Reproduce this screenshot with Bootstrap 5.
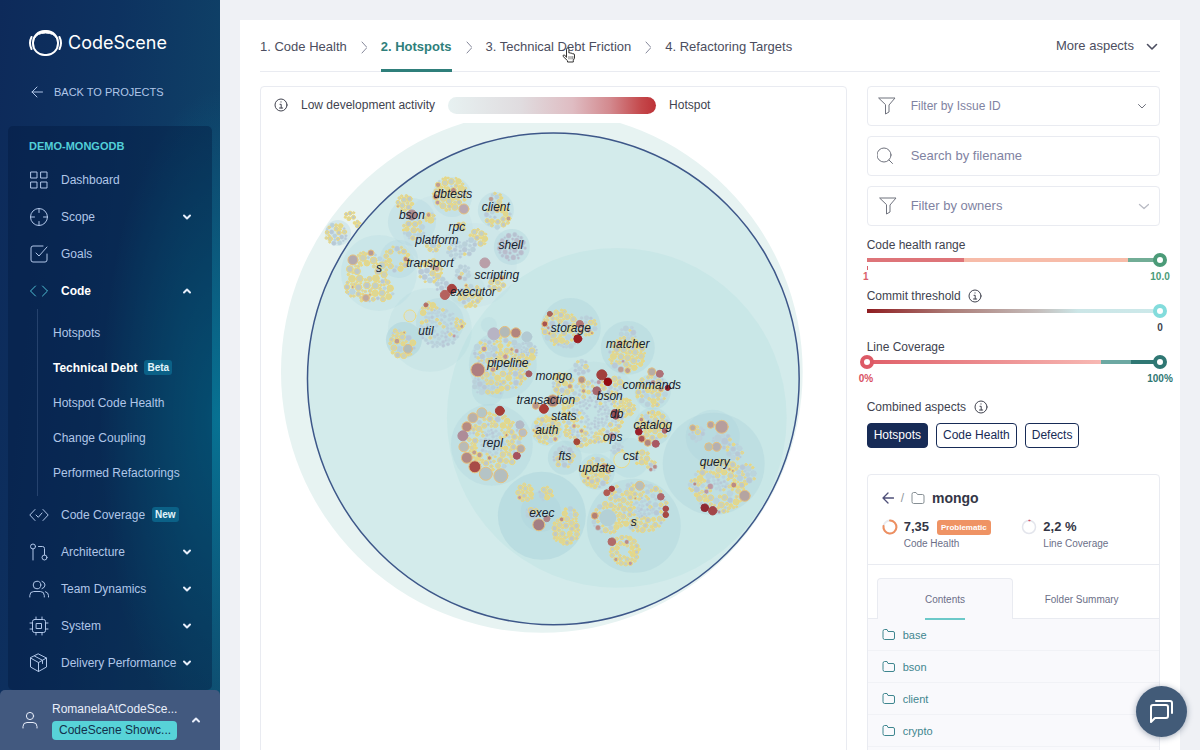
<!DOCTYPE html>
<html lang="en">
<head>
<meta charset="utf-8">
<meta name="viewport" content="width=device-width, initial-scale=1">
<title>CodeScene – Technical Debt</title>
<link href="https://cdn.jsdelivr.net/npm/bootstrap@5.3.0/dist/css/bootstrap.min.css" rel="stylesheet">
<style>
  :root { --ink:#41434f; --muted:#6c6f88; --line:#e9ebf1; --teal:#2f7f7b; --navy:#172b56; --side:#b0c6e8; }
  body { font-family: "Liberation Sans", Arial, sans-serif; font-size: 12px; line-height: 16px; color: var(--ink); background: #eff1f5; }
  svg { fill: none; stroke: currentColor; stroke-width: 1; stroke-linecap: round; stroke-linejoin: round; flex: none; }
  a { text-decoration: none; color: inherit; }
  .scroller { overflow: auto; scrollbar-width: none; }
  .scroller::-webkit-scrollbar { display: none; }

  .sidebar { width: 220px; color: var(--side);
    background: radial-gradient(ellipse 120px 330px at 100% 56%, #077293 0, rgba(7,114,147,0) 100%),
      linear-gradient(96deg, #0d2a5a 0%, #0d3260 40%, #10496b 100%); }
  .brand { padding: 29px 28px 0; gap: 5px; font-family: Inter, sans-serif; font-size: 18px; line-height: 28px; color: #fff; }
  .back { padding: 0 31px; margin: 26px 0 25px; gap: 11px; font-size: 11px; line-height: 18px; }
  .menu-box { margin: 0 8px; padding: 3px 0; border-radius: 5px; min-height: 0; overflow: hidden; background: rgba(3,24,62,.4); }
  .menu-box h2 { margin: 0; padding: 0 21px; font-size: 11px; font-weight: 600; line-height: 35px; height: 32px; color: #52cfd8; }
  .menu-item { height: 37px; padding: 0 20px 0 21px; color: inherit; white-space: nowrap; }
  .menu-item svg:first-child { margin-right: 12px; }
  .menu-item .go { margin-left: auto; color: #e6eefb; stroke-width: 2; }
  .menu-item .tag { margin-left: 7px; }
  .menu-item.is-open { color: #fff; font-weight: 600; }
  .menu-item.is-open svg:first-child { color: #4fc0d4; }
  .submenu { margin: 0 0 0 29px; padding: 6px 0 6px 15px; border-left: 1px solid rgba(140,170,210,.22); }
  .submenu a { display: flex; align-items: center; gap: 7px; height: 35px; white-space: nowrap; }
  .submenu a.on { color: #fff; font-weight: 600; }
  .tag { padding: 0 3px; border-radius: 3px; background: #0b6187; color: #e2f4fa; font-size: 10px; font-weight: 600; line-height: 15px; }
  .account { height: 60px; padding: 0 19px 0 22px; gap: 14px; background: #42597f; border-radius: 5px 5px 0 0; color: #e8eefa; border: 0; text-align: left; white-space: nowrap; }
  .account .plan { width: 125px; padding: 0 7px; line-height: 19px; border-radius: 4px; background: #57d3d8; color: #12304c; }
  .account svg:last-child { stroke-width: 2; }

  .page { margin: 20px 20px 0; padding: 0 20px; background: #fff; }
  .aspects { height: 52px; border-bottom: 1px solid var(--line); font-size: 13px; }
  .aspects ol { gap: 14px; }
  .aspects ol svg { color: #85889a; }
  .aspects li a { display: block; line-height: 54px; height: 52px; white-space: nowrap; }
  .aspects li a.on { color: var(--teal); font-weight: 600; border-bottom: 3px solid var(--teal); }
  .aspects button, .aspects a { color: #4c4e60; }
  .pointer { left: 76px; top: 27px; }
  .columns { display: grid; grid-template-columns: 2fr 1fr; gap: 20px; padding-top: 14px; }
  .panel { border: 1px solid var(--line); border-radius: 4px; }
  .legend-row { height: 36px; padding: 0 13px; gap: 13px; }
  .scale-bar { width: 208px; height: 17px; border-radius: 9px; background: linear-gradient(90deg,#e7f1f1,#e0dcdf 35%,#dfbcc2 60%,#d3898e 78%,#c4484b 93%,#bd3238); }
  .bubbles { display: block; width: 100%; height: auto; }
  .bubbles text { font: italic 12px "Liberation Sans", Arial, sans-serif; fill: #17202b; stroke: none; text-anchor: middle; }

  .field { height: 40px; padding: 0 10px 0 9px; gap: 14px; margin-bottom: 10px; color: #6f727d; }
  .field input, .field select { flex: 1; min-width: 0; border: 0; outline: 0; background: none; appearance: none; color: #7f83a2; padding: 0; }
  .field input::placeholder { color: #7f83a2; opacity: 1; }
  .field .roomy { font-size: 13px; }
  .range-row { margin-bottom: 2px; }
  .range-row label, .range-row .cap { display: flex; align-items: center; gap: 7px; height: 17px; }
  .rail { position: relative; height: 14px; margin: 0 -7px; }
  .rail input { position: absolute; inset: 0; width: 100%; height: 14px; margin: 0; appearance: none; background: none; pointer-events: none; }
  .rail input::-webkit-slider-runnable-track { height: 14px; background: var(--track, none) no-repeat center / calc(100% - 14px) 4px; }
  .rail input::-webkit-slider-thumb { appearance: none; pointer-events: auto; width: 14px; height: 14px; border-radius: 50%; background: #fff; border: 4px solid var(--knob); }
  .ends { display: flex; justify-content: space-between; height: 18px; margin: 0 -14px 0 -8px; font-size: 10px; line-height: 20px; font-weight: 600; }
  .ends span { min-width: 14px; text-align: center; }
  .ends span:last-child { min-width: 28px; }
  .tick-end { border-left: 1px solid #d9606b; height: 4px; width: 1px; left: 7px; top: 13px; }
  .combined { padding: 10px 0 8px; }
  .chip { height: 25px; padding: 0 6px; border: 1px solid var(--navy); border-radius: 4px; background: #fff; color: var(--navy); line-height: 23px; }
  .chip.on { background: var(--navy); color: #fff; }

  .details { margin-top: 26px; overflow: hidden; }
  .summary { padding: 12px 14px 13px; border-bottom: 1px solid var(--line); }
  .crumb { height: 22px; margin-bottom: 8px; gap: 7px; }
  .crumb strong { font-size: 14px; color: #343646; }
  .metric { gap: 6px; font-size: 10px; line-height: 14px; color: var(--muted); }
  .metric strong { font-size: 13px; line-height: 20px; font-weight: 600; color: #343646; }
  .flag { background: #ef9364; color: #fff; font-size: 8px; font-weight: 600; line-height: 15px; border-radius: 3px; padding: 0 4px; }
  .folder-tabs { padding: 13px 9px 0; border-bottom: 1px solid var(--line); font-size: 10px; }
  .folder-tabs button { flex: 1; height: 41px; margin-bottom: -1px; border: 1px solid transparent; border-bottom: 0; background: none; color: var(--muted); padding: 0; }
  .folder-tabs button.on { background: #f9f9fc; border-color: var(--line); border-radius: 4px 4px 0 0; }
  .folder-tabs button span { display: inline-block; line-height: 37px; min-width: 40px; }
  .folder-tabs button.on span { box-shadow: 0 2px #6cc9c9; }
  .folder-list { background: #f9f9fc; font-size: 11px; }
  .folder-list a { display: flex; align-items: center; gap: 8px; height: 32px; padding: 0 14px; color: #3f868f; border-bottom: 1px solid #f1f2f6; }
  .chat { right: 13px; bottom: 13px; width: 51px; height: 51px; background: #425b78; color: #fff; box-shadow: 0 1px 6px rgba(30,50,80,.4); }
  .chat svg { stroke-width: 2; }
</style>
</head>
<body>
<div class="d-flex vh-100 overflow-hidden">

  <aside class="sidebar d-flex flex-column flex-shrink-0">
    <a href="#" class="brand d-flex align-items-center">
      <svg width="35" height="28" viewBox="0 0 35 28"><rect x="5" y="2" width="25" height="24" rx="11.5" stroke-width="2"/><path d="M6 10Q8 2 17.500 2T29 10Q26 4 17.500 4T6 10Z" fill="currentColor"/><path d="M3.500 8Q.5 14 3.500 20M31.500 8Q34.500 14 31.500 20" stroke-width="2"/></svg>
      <span>CodeScene</span>
    </a>
    <a href="#" class="back d-flex align-items-center">
      <svg width="12" height="12" viewBox="0 0 12 12"><path d="M11.500 6H1M6 1L1 6l5 5"/></svg>
      <span>BACK TO PROJECTS</span>
    </a>
    <nav class="menu-box flex-grow-1">
      <h2>DEMO-MONGODB</h2>
      <a href="#" class="menu-item d-flex align-items-center"><svg width="20" height="20"><path d="M2 2h6v6H2zM12 2h6v6h-6zM2 12h6v6H2zM12 12h6v6h-6z"/></svg>Dashboard</a>
      <a href="#" class="menu-item d-flex align-items-center"><svg width="20" height="20"><circle cx="10" cy="10" r="8.500"/><path d="M10 1.500v4M10 14.500v4M1.500 10h4M14.500 10h4"/></svg>Scope<svg class="go" width="10" height="10"><path d="M2 3.500l3 3 3-3"/></svg></a>
      <a href="#" class="menu-item d-flex align-items-center"><svg width="20" height="20"><path d="M14 2H4a2 2 0 0 0-2 2v12a2 2 0 0 0 2 2h12a2 2 0 0 0 2-2v-6M7 9l3 3 8-9"/></svg>Goals</a>
      <a href="#" class="menu-item is-open d-flex align-items-center"><svg width="20" height="20"><path d="M6.500 5L1.500 10l5 5M13.500 5l5 5-5 5"/></svg>Code<svg class="go" width="10" height="10"><path d="M2 6.500l3-3 3 3"/></svg></a>
      <div class="submenu">
        <a href="#">Hotspots</a>
        <a href="#" class="on">Technical Debt <span class="tag">Beta</span></a>
        <a href="#">Hotspot Code Health</a>
        <a href="#">Change Coupling</a>
        <a href="#">Performed Refactorings</a>
      </div>
      <a href="#" class="menu-item d-flex align-items-center"><svg width="20" height="20"><path d="M6 4.500L.8 10 6 15.500M14 4.500l5.200 5.500-5.200 5.500M7 10l2.300 2.300L13 8"/></svg>Code Coverage<span class="tag">New</span></a>
      <a href="#" class="menu-item d-flex align-items-center"><svg width="20" height="20"><circle cx="4" cy="4.500" r="2.500"/><circle cx="15.500" cy="15.500" r="2.500"/><path d="M4 7v11M9.500 4.500h4q2 0 2 2V13"/></svg>Architecture<svg class="go" width="10" height="10"><path d="M2 3.500l3 3 3-3"/></svg></a>
      <a href="#" class="menu-item d-flex align-items-center"><svg width="20" height="20"><circle cx="8" cy="6" r="3.800"/><path d="M.8 18v-1.500q0-4 4-4h6.500q4 0 4 4V18M13 2.300q3 1 3 3.700t-3 3.700M16.500 12.700q3 .8 3 3.800V18"/></svg>Team Dynamics<svg class="go" width="10" height="10"><path d="M2 3.500l3 3 3-3"/></svg></a>
      <a href="#" class="menu-item d-flex align-items-center"><svg width="20" height="20"><rect x="3.500" y="3.500" width="13" height="13" rx="2"/><path d="M7.500 7.500h5v5h-5zM7 1v2.500M13 1v2.500M7 16.500V19M13 16.500V19M1 7h2.500M1 13h2.500M16.500 7H19M16.500 13H19"/></svg>System<svg class="go" width="10" height="10"><path d="M2 3.500l3 3 3-3"/></svg></a>
      <a href="#" class="menu-item d-flex align-items-center"><svg width="20" height="20"><path d="M9.500 1l8 4v9l-8 4.500L1.500 14V5zM1.500 5l8 4.500 8-4.500M9.500 9.500v9M5.500 3l8 4.300v3.200"/></svg>Delivery Performance<svg class="go" width="10" height="10"><path d="M2 3.500l3 3 3-3"/></svg></a>
      <span class="menu-item d-flex align-items-center"><svg width="20" height="20"><circle cx="10" cy="10" r="9"/></svg></span>
    </nav>
    <button class="account d-flex align-items-center flex-shrink-0" type="button">
      <svg width="16" height="18"><circle cx="8" cy="5" r="3.600"/><path d="M1 17v-1.500q0-4 4-4h6q4 0 4 4V17"/></svg>
      <span class="d-flex flex-column gap-1"><span>RomanelaAtCodeSce...</span><span class="plan">CodeScene Showc...</span></span>
      <svg class="ms-auto" width="10" height="10"><path d="M2 6.500l3-3 3 3"/></svg>
    </button>
  </aside>

  <main class="scroller flex-grow-1">
    <div class="page">
      <nav class="aspects d-flex justify-content-between">
        <ol class="list-unstyled d-flex align-items-start mb-0">
          <li><a href="#">1. Code Health</a></li>
          <li><svg width="6" height="54"><path d="M1 22l5 5.500-5 5.500"/></svg></li>
          <li><a href="#" class="on">2. Hotspots</a></li>
          <li><svg width="6" height="54"><path d="M1 22l5 5.500-5 5.500"/></svg></li>
          <li class="position-relative"><a href="#">3. Technical Debt Friction</a>
            <svg class="pointer position-absolute" width="14" height="16" viewBox="0 0 14 16"><path d="M4.500 10V2.200a1.200 1.200 0 0 1 2.400 0V6q1.200-.8 2 .3 1.300-.6 1.800.5 1.800-.5 1.800 1.200v3.200l-1.200 2V15H5.500v-1.300L1 9.300q-.4-1.600 1.300-1.300z" fill="#fff" stroke="#333"/><path d="M7 9.500v2.500M9 9.500v2.500M10.800 9.500v2.500" stroke="#555" stroke-width=".8"/></svg></li>
          <li><svg width="6" height="54"><path d="M1 22l5 5.500-5 5.500"/></svg></li>
          <li><a href="#">4. Refactoring Targets</a></li>
        </ol>
        <button type="button" class="border-0 bg-transparent p-0 d-flex align-items-center gap-2">More aspects <svg width="18" height="14"><path d="M5.500 5.500L10 10l4.500-4.500" stroke-width="1.600"/></svg></button>
      </nav>

      <div class="columns">
        <section class="panel">
          <div class="legend-row d-flex align-items-center">
            <svg width="14" height="14" viewBox="0 0 14 14"><circle cx="7" cy="7" r="6"/><path d="M6 6.300h1.200V10M5.500 10h3.200M7 3.800v.3"/></svg>
            <span>Low development activity</span><span class="scale-bar"></span><span>Hotspot</span>
          </div>
          <svg class="bubbles" id="bubbles" viewBox="261 123 585 640" role="img" aria-label="Hotspot map"></svg>
        </section>

        <section>
          <div class="field panel d-flex align-items-center"><svg width="20" height="20"><path d="M2 2h16l-6 7v7l-3.500 2V9z"/></svg>
            <select aria-label="Filter by Issue ID"><option>Filter by Issue ID</option></select><svg width="14" height="14"><path d="M3.500 5.500L7 9l3.500-3.500"/></svg></div>
          <div class="field panel d-flex align-items-center"><svg width="20" height="20"><circle cx="6" cy="9" r="7" transform="translate(1)"/><path d="M12 14l3.500 3.500"/></svg>
            <input class="roomy" type="text" placeholder="Search by filename" aria-label="Search by filename"></div>
          <div class="field panel d-flex align-items-center"><svg width="20" height="20"><path d="M3 2h16l-6 7v7l-3.500 2V9z"/></svg>
            <select class="roomy" aria-label="Filter by owners"><option>Filter by owners</option></select><svg width="14" height="14" color="#b9bbc4"><path d="M4.500 5.500L9 9.500l4.500-4" stroke-width="1.300"/></svg></div>

          <div class="range-row">
            <label for="health">Code health range</label>
            <div class="rail" style="--knob:#4b9b78;--track:linear-gradient(90deg,#de7479 33%,#f7bca9 33%,#f7bca9 89%,#72ad96 89%)"><input id="health" type="range" min="1" max="10" value="10"><span class="tick-end position-absolute"></span></div>
            <div class="ends"><span style="color:#d9606b">1</span><span style="color:#4b9b78">10.0</span></div>
          </div>
          <div class="range-row">
            <label for="commit">Commit threshold <svg width="14" height="14" viewBox="0 0 14 14"><circle cx="7" cy="7" r="6"/><path d="M6 6.300h1.200V10M5.500 10h3.200M7 3.800v.3"/></svg></label>
            <div class="rail" style="--knob:#83dcdc;--track:linear-gradient(90deg,#8f1d21,#ab7b76 28%,#c4bcba 58%,#cce6e7 72%,#cce9ea)"><input id="commit" type="range" value="100"></div>
            <div class="ends"><span></span><span>0</span></div>
          </div>
          <div class="range-row">
            <div class="cap">Line Coverage</div>
            <div class="rail" style="--knob:#2f7773"><input aria-label="Lowest coverage" type="range" value="0" style="--knob:#dd5a66;--track:linear-gradient(90deg,#e05f69,#f7b8b3 80%,#6ca8a2 80%,#6ca8a2 90%,#2f7773 90%)"><input aria-label="Highest coverage" type="range" value="100"></div>
            <div class="ends"><span style="color:#d9505f">0%</span><span style="color:#2f7773">100%</span></div>
          </div>

          <div class="combined d-flex align-items-center gap-2">Combined aspects <svg width="14" height="14" viewBox="0 0 14 14"><circle cx="7" cy="7" r="6"/><path d="M6 6.300h1.200V10M5.500 10h3.200M7 3.800v.3"/></svg></div>
          <div class="d-flex gap-2"><button type="button" class="chip on">Hotspots</button><button type="button" class="chip">Code Health</button><button type="button" class="chip">Defects</button></div>

          <div class="details panel">
            <div class="summary">
              <div class="crumb d-flex align-items-center">
                <a href="#" aria-label="Back"><svg class="d-block" width="12" height="12" viewBox="0 0 12 12" color="#4e4f78"><path d="M11.500 6H1M6 1L1 6l5 5" stroke-width="1.300"/></svg></a>
                <span class="text-secondary opacity-75">/</span>
                <svg width="14" height="14" color="#868f94"><path d="M1 3q0-1.500 1.500-1.500H5L6.500 3.500h5Q13 3.500 13 5V11q0 1.500-1.500 1.500h-9Q1 12.500 1 11z"/></svg>
                <strong>mongo</strong>
              </div>
              <div class="row g-0">
                <div class="col-6 d-flex metric"><svg width="16" height="20"><circle cx="8" cy="10" r="6.500" stroke="#e9ebef" stroke-width="2"/><path d="M8 3.500A6.500 6.500 0 1 1 1.500 9" stroke="#ee8f60" stroke-width="2"/></svg>
                  <div><div class="d-flex align-items-center gap-2"><strong>7,35</strong><span class="flag">Problematic</span></div>Code Health</div></div>
                <div class="col-6 d-flex metric ps-2"><svg width="16" height="20"><circle cx="8" cy="10" r="6.500" stroke="#e3e5ec" stroke-width="1.500"/><path d="M8 3.500h.8" stroke="#d9505f" stroke-width="1.500"/></svg>
                  <div><strong class="d-block">2,2 %</strong>Line Coverage</div></div>
              </div>
            </div>
            <div class="folder-tabs d-flex"><button type="button" class="on"><span>Contents</span></button><button type="button"><span>Folder Summary</span></button></div>
            <nav class="folder-list pb-4" id="folders"></nav>
          </div>
        </section>
      </div>
    </div>
  </main>
</div>
<button type="button" class="chat position-fixed rounded-circle border-0 p-0 d-flex align-items-center justify-content-center" aria-label="Chat">
  <svg width="26" height="26"><path d="M2 8q0-2 2-2h13q2 0 2 2v9q0 2-2 2H6l-4 4zM7 2h14q2 0 2 2v10"/></svg>
</button>

<script>
  document.getElementById('folders').innerHTML = ['base', 'bson', 'client', 'crypto'].map(n =>
    `<a href="#"><svg width="13" height="13"><path d="M1 3q0-1.500 1.500-1.500H5L6 3.500h5q1.500 0 1.500 1.500v5q0 1.500-1.500 1.500H2.500Q1 11.500 1 10z"/></svg>${n}</a>`).join('');

  // Seeded generator, so that the map is drawn alike on every load
  let seed = 7;
  const rnd = () => (seed = (seed * 16807) % 2147483647) / 2147483647;
  const out = [];
  const disc = (x, y, r, fill, extra = '') => out.push(`<circle cx="${x}" cy="${y}" r="${r}" fill="${fill}" stroke="none" ${extra}/>`);

  disc(542, 372, 261, '#e7f3f2');
  disc(553.5, 379, 246, '#d3ebeb');
  disc(617, 418, 170, '#c9e7e7');
  out.push('<circle cx="553.5" cy="379" r="246" stroke="#3d5789" stroke-width="1.500"/>');

  // Folder backgrounds: x, y, radius, strength
  [[452,197,20,.25],[496,210,18,.3],[412,222,24,.25],[338,233,13,.3],[379,273,38,.2],[399,259,19,.25],[512,247,18,.35],
   [430,330,42,.18],[440,322,24,.3],[404,340,18,.5],[438,230,35,.12],[475,265,42,.12],[467,290,18,.15],[503,365,34,.28],[489,325,8,.2],
   [571,328,30,.35],[628,348,27,.35],[492,445,41,.28],[547,430,16,.25],[565,458,17,.35],[597,472,18,.3],[630,458,20,.25],
   [653,392,18,.3],[653,427,19,.3],[714,464,51,.34],[713,437,27,.25],[542,516,44,.45],[541,512,20,.3],[634,526,47,.35],[594,408,46,.15],[488,390,16,.3]
  ].forEach(([x, y, r, k]) => disc(x, y, r, '#a9d1da', `opacity="${k}"`));

  // Large single files, kept in place while the small ones are packed round them
  const big = [
    [464,209,5,'#bba9b1',1],[412,215,5,'#ad8d92'],[353,260,5,'#b4aaae',1],[371,253,3,'#b59a98',1],[366,298,3.5,'#bda9a2',1],
    [452,289,4.6,'#a6423f'],[445,295,4.6,'#b5625e'],[485,263,5,'#b99fa8'],[410,316,6,'#cfe2de',2],[426,305,2,'#b26c62'],[408,349,4.5,'#b3bdb9',1],
    [478,370,7,'#ae7e80',1],[494,334,6,'#b7b4c4'],[505,332,5.5,'#b3bab8',1],[516,333,5,'#b2857f',1],[527,337,5,'#b3cad3'],[529,374,3,'#a55c61'],
    [500,411,4.5,'#a43d38'],[467,427,5,'#b68b82',1],[473,418,5,'#b9b1ab',1],[463,436,5,'#ae8c98'],[464,447,5,'#b8bbb7',1],[467,458,5.5,'#b28a85',1],[475,467,6,'#a84b48',1],
    [486,474,6.5,'#b5c4c6',1],[501,476,7,'#b4bebf',1],[482,413,5,'#b5c5c5',1],[517,456,3.5,'#a6525c'],[521,449,4,'#b7ada9',1],[523,433,4,'#b9bdc1',1],[520,425,4,'#b3b9c5'],
    [578,339,4,'#9b1d20'],[544,409,4.5,'#a83a34'],[553,401,6,'#a67e79',1],[536,406,3.5,'#b9968a',1],[545,324,3,'#a8544d',1],[550,314,2.5,'#ab6358'],[580,324,3.5,'#b27573'],
    [602,375,5,'#a2403d'],[608,382,3.8,'#940d11'],[597,391,4,'#a5666c'],[582,380,3.5,'#b39287',1],[616,416,3.4,'#9b4f56'],[615,413,3.4,'#9b4f56'],[612,436,3,'#b895a0'],[577,442,3,'#a64737'],
    [668,388,2.6,'#98202a'],[660,374,3.5,'#ae7177'],[652,372,4,'#b8ada4',1],[639,432,3.3,'#9a1f29'],[642,439,3.5,'#a55558',1],[648,443,3.5,'#b18780',1],[656,444,3.5,'#a95962'],[665,431,2.5,'#a96267'],
    [722,427,6.5,'#b69e9d',1],[711,425,3.5,'#b8a39e',1],[717,447,4.5,'#b5afb1',1],[709,447,4,'#b8beb4',1],[745,496,5.5,'#b5a4a1',1],[705,508,3.8,'#902a33'],[713,511,4.2,'#a34548'],[693,428,3,'#b9ada4',1],
    [539,525,6,'#a37e83',1],[547,519,3,'#ae8689'],[607,493,3,'#b15b52'],[612,489,2.7,'#a73e3c'],[608,518,8,'#b4d0d6'],[595,516,3.5,'#b48174',1],
    [661,497,3.3,'#ad666b'],[666,509,2.8,'#a94a48'],[666,515,2.8,'#a64940'],[612,542,3.8,'#b16c69'],[640,486,4.5,'#b9beb9',1],[622,460,8,'#c9e5e0',2]
  ];
  const placed = big.map(b => b.slice());

  // Packed groups of small files: x, y, radius, inner hole, largest dot, share of yellow outlines
  const groups = [
    [450,194,18,0,3,.92],[496,200,8,0,2.4,.6],[498,216,14,3,2.4,.7],[405,203,9,0,2.6,.85],[414,229,12,0,2.8,.6],[430,218,6,0,3,.8],[350,216,6,0,2,1],[357,224,4,0,2,.7],[336,234,12,0,2.2,.35],
    [367,272,21,7,3.4,.75],[383,290,12,0,3.2,.8],[354,288,10,0,3,.75],[367,293,11,0,3.2,.75],[397,259,14,6,2.6,.95],[512,247,15,0,2.6,.02],[478,238,10,0,2.8,.9],[467,248,9,0,2.6,.1],[433,245,8,0,3,.4],
    [430,271,13,0,2.8,.6],[456,250,10,0,2,.1],[461,227,6,0,2,.5],[432,267,6,0,2.5,.7],[463,273,9,0,2.4,.1],[470,296,13,0,2.4,.6],[497,283,10,0,2.4,.6],[441,284,8,0,2.5,.1],
    [460,325,6,0,2,1],[440,329,21,4,1.7,.12],[430,311,10,0,2.8,.9],[445,343,5,0,2,.8],[402,345,14,0,2.9,.75],[398,335,7,0,2.6,.6],
    [503,364,28,0,2.8,.65],[486,352,13,0,3,.2],[527,352,11,0,3,.2],[484,384,12,0,2.8,.1],[497,388,8,0,2.3,.7],[518,375,10,0,2.6,.6],
    [492,443,31,13,2.8,.85],[492,443,14,0,1.7,.2],[560,328,19,5,2.8,.75],[587,326,11,0,2.4,.65],[568,342,8,0,2.6,.3],[627,355,19,0,3,.85],[628,334,9,0,2.8,.2],
    [563,384,12,0,2.6,.7],[582,368,9,0,2.4,.2],[594,412,33,17,2.2,.55],[593,413,18,5,1.4,.06],[547,430,15,0,2.6,.9],[570,432,7,0,2.2,.8],[582,440,9,0,2.3,.8],[616,384,9,0,2.8,.4],[626,408,10,0,2.8,.8],
    [652,391,17,0,2.6,.65],[653,427,17,0,2.6,.8],[564,457,12,0,2.6,.45],[596,473,16,0,2.8,.85],[642,458,9,0,2.8,.9],[617,449,7,0,2.2,.2],[652,466,6,0,2.2,.3],
    [697,434,9,0,2.8,.2],[722,441,10,0,3.6,.08],[735,452,9,0,2.6,.3],[720,486,28,9,3,.78],[719,483,10,0,1.5,.05],[746,474,11,0,3,.4],[696,486,8,0,3,.7],
    [525,493,10,0,2.4,.9],[546,494,8,0,2.6,.6],[532,513,7,0,3,.2],[566,531,15,4,2.7,.95],[570,515,9,0,2.6,.7],
    [643,508,26,10,2.6,.85],[643,509,12,0,1.6,.1],[608,518,17,8,2.6,.85],[625,551,16,5,2.2,.95],[616,494,9,0,2.6,.7],[631,488,6,0,2.6,.1]
  ];
  const greys = ['#b9d1d9', '#b8c9d6', '#bbd5dc'], warm = ['#c2cfc6', '#cbd1b9', '#bfc9c8', '#dcd795'], reds = ['#bf9d92', '#bb8a85', '#bd98a2'];
  for (const [cx, cy, R, hole, max, share] of groups) {
    for (let r = max; r >= .9; r -= .3) {
      const tries = r < 1.6 ? 420 : 70;
      for (let i = 0; i < tries; i++) {
        const a = rnd() * 6.283, d = hole + Math.sqrt(rnd()) * (R - hole - r);
        const x = cx + Math.cos(a) * d, y = cy + Math.sin(a) * d;
        if (placed.some(p => Math.hypot(p[0] - x, p[1] - y) < p[2] + r + .2)) continue;
        const yellow = rnd() < share, red = rnd() < share * .15 && r > 1.4;
        const pick = red ? reds : yellow ? warm : share < .05 ? ['#b9bccb', '#b6c2d0'] : greys;
        placed.push([x, y, r]);
        out.push(`<circle cx="${x.toFixed(1)}" cy="${y.toFixed(1)}" r="${r.toFixed(1)}" fill="${pick[Math.floor(rnd() * pick.length)]}" stroke="${yellow ? '#ebd880' : '#bdd0dd'}" stroke-width="${yellow ? 1 : .4}"/>`);
      }
    }
  }
  big.forEach(([x, y, r, c, ring]) => out.push(`<circle cx="${x}" cy="${y}" r="${r}" fill="${c}" stroke="${ring === 2 ? '#eddb84' : ring ? '#e6c07c' : c}" stroke-width="1"/>`));

  [['dbtests',453,194],['client',496,207],['bson',412,215],['rpc',457,227],['platform',437,240],['shell',511,245],['s',379,268],['transport',430,263],
   ['scripting',497,275],['executor',473,292],['util',426,331],['storage',571,328],['matcher',628,344],['pipeline',508,363],['mongo',554,376],['commands',652,385],
   ['bson',610,396],['transaction',546,400],['stats',564,416],['db',617,414],['auth',547,430],['catalog',653,425],['repl',493,443],['ops',613,437],
   ['fts',565,456],['cst',631,456],['update',597,468],['query',715,462],['exec',542,513],['s',634,522]
  ].forEach(([t, x, y]) => out.push(`<text x="${x}" y="${y + 4}">${t}</text>`));
  document.getElementById('bubbles').innerHTML = out.join('');
</script>
<script src="https://cdn.jsdelivr.net/npm/bootstrap@5.3.0/dist/js/bootstrap.bundle.min.js"></script>
</body>
</html>
